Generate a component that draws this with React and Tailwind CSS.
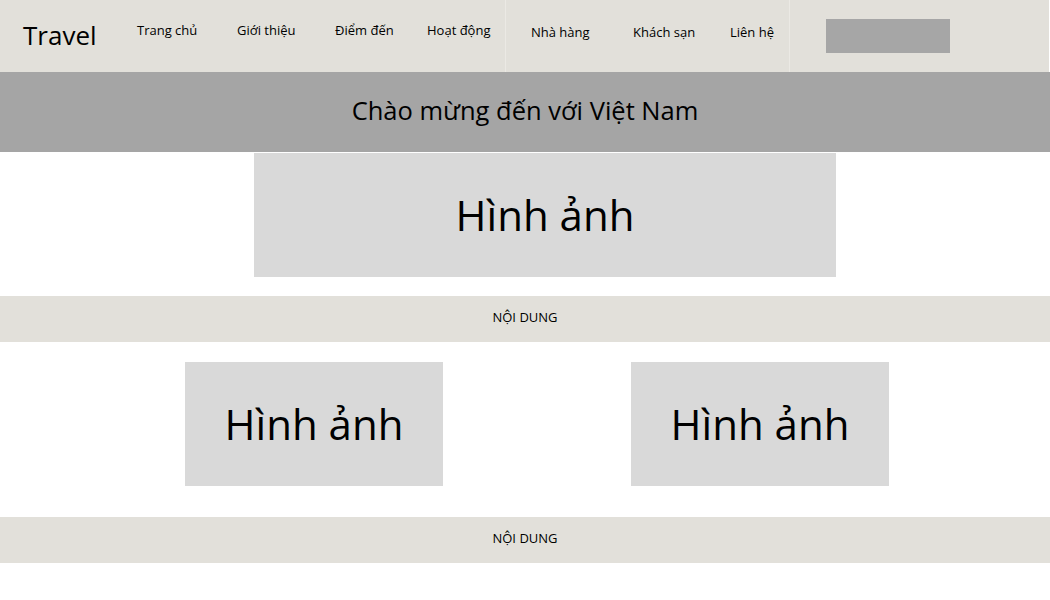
const navLeft = [
  { label: "Trang chủ", w: "w-[100px]" },
  { label: "Giới thiệu", w: "w-[98px]" },
  { label: "Điểm đến", w: "w-[92px]" },
  { label: "Hoạt động", w: "w-[78px]" },
];

const navRight = [
  { label: "Nhà hàng", w: "w-[102px]" },
  { label: "Khách sạn", w: "w-[97px]" },
  { label: "Liên hệ", w: "w-[59px]" },
];

function ImageBox({ className }) {
  return (
    <div
      className={`flex items-center justify-center bg-[#d9d9d9] pb-[2px] text-[42px] text-black ${className}`}
    >
      Hình ảnh
    </div>
  );
}

function ContentBar() {
  return (
    <div className="flex h-[46px] items-center justify-center bg-[#e2e0da] pb-[3px] text-[13px] text-black">
      NỘI DUNG
    </div>
  );
}

export default function App() {
  return (
    <div
      className="min-h-screen w-[1050px] bg-white"
      style={{ fontFamily: '"Open Sans", "Noto Sans", sans-serif' }}
    >
      <header className="flex h-[72px] w-[1049px] items-stretch bg-[#e2e0da] text-black">
        <div className="flex items-center pl-[23px]">
          <span className="w-[114px] pb-[2px] text-[26px] leading-none">Travel</span>
          {navLeft.map((item) => (
            <span key={item.label} className={`${item.w} mb-[10px] text-[13px]`}>
              {item.label}
            </span>
          ))}
        </div>
        <div className="w-px bg-[#ebe9e4]" />
        <div className="flex items-center pb-[6px] pl-[25px]">
          {navRight.map((item) => (
            <span key={item.label} className={`${item.w} text-[13px]`}>
              {item.label}
            </span>
          ))}
        </div>
        <div className="w-px bg-[#ebe9e4]" />
        <div className="flex items-center pl-[36px]">
          <div className="h-[34px] w-[124px] bg-[#a6a6a6]" />
        </div>
      </header>

      <div className="flex h-[80px] items-center justify-center bg-[#a5a5a5] pb-[4px] text-[25.5px] text-black">
        Chào mừng đến với Việt Nam
      </div>

      <div className="mt-px flex pl-[254px]">
        <ImageBox className="h-[124px] w-[582px]" />
      </div>

      <div className="mt-[19px]">
        <ContentBar />
      </div>

      <div className="mt-[20px] flex pl-[185px]">
        <ImageBox className="h-[124px] w-[258px]" />
        <ImageBox className="ml-[188px] h-[124px] w-[258px]" />
      </div>

      <div className="mt-[31px]">
        <ContentBar />
      </div>
    </div>
  );
}
